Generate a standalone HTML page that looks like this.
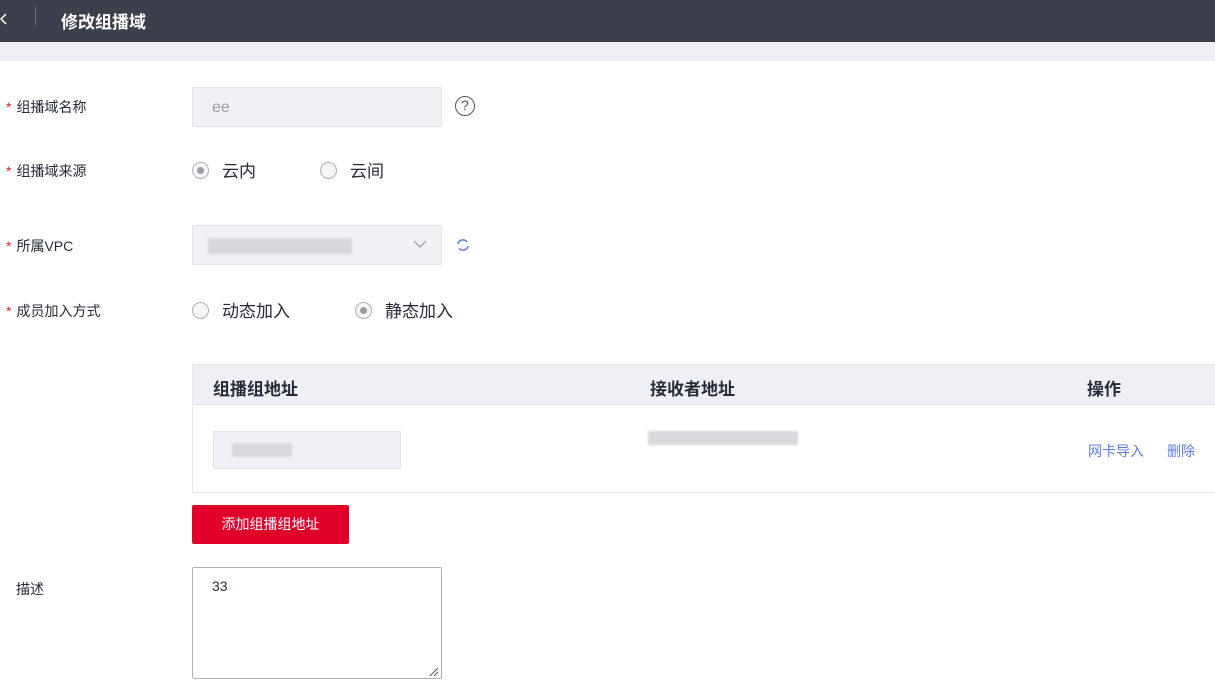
<!DOCTYPE html>
<html><head><meta charset="utf-8"><style>
*{box-sizing:border-box;margin:0;padding:0}
body{width:1215px;height:693px;overflow:hidden;background:#fff;font-family:"Liberation Sans","Noto Sans CJK SC",sans-serif;color:#252b3a;position:relative}
.top{position:absolute;left:0;top:0;width:1215px;height:42px;background:#3c3f4c}
.strip{position:absolute;left:0;top:42px;width:1215px;height:19px;background:#eef0f5}
.abs{position:absolute}
.lbl{position:absolute;left:6px;font-size:14px;color:#252b3a}
.lbl b{color:#e0252c;font-weight:normal;margin-right:5px}
.inp{position:absolute;background:#f0f1f6;border:1px solid #dfe1e6;border-radius:2px}
.radio{position:absolute;width:17px;height:17px;border:1px solid #adb0b8;border-radius:50%;background:#f5f5f7}
.radio.on::after{content:"";position:absolute;left:4px;top:4px;width:7px;height:7px;border-radius:50%;background:#9a9ca3}
.rt{position:absolute;font-size:17px;color:#252b3a}
.blur{position:absolute;background:#d8d8dc;filter:blur(1px)}
</style></head><body>
<div class="top"></div>
<svg class="abs" style="left:0;top:12px" width="8" height="14"><path d="M6 2L1 7l5 5" stroke="#fff" fill="none" stroke-width="1.5"/></svg>
<div class="abs" style="left:35px;top:6px;width:1px;height:20px;background:#6a6d78"></div>
<div class="abs" style="left:61px;top:8px;color:#fff;font-size:17px;font-weight:bold">修改组播域</div>
<div class="strip"></div>

<div class="lbl" style="top:97px"><b>*</b>组播域名称</div>
<div class="inp" style="left:192px;top:87px;width:250px;height:40px"></div>
<div class="abs" style="left:212px;top:99px;font-size:16px;color:#9a9ca3">ee</div>
<div class="abs" style="left:455px;top:96px;width:20px;height:20px;border:1.5px solid #555;border-radius:50%;font-size:14px;text-align:center;line-height:17px;color:#555">?</div>

<div class="lbl" style="top:161px"><b>*</b>组播域来源</div>
<div class="radio on" style="left:192px;top:162px"></div><div class="rt" style="left:222px;top:157px">云内</div>
<div class="radio" style="left:320px;top:162px"></div><div class="rt" style="left:350px;top:157px">云间</div>

<div class="lbl" style="top:236px"><b>*</b>所属VPC</div>
<div class="inp" style="left:192px;top:225px;width:250px;height:40px"></div>
<div class="blur" style="left:208px;top:238px;width:144px;height:16px"></div>
<svg class="abs" style="left:412px;top:238px" width="16" height="12"><path d="M2 3l6 6 6-6" stroke="#9a9ca3" fill="none" stroke-width="1.2"/></svg>
<svg class="abs" style="left:456px;top:238px" width="14" height="14"><path d="M2 6a5 5 0 0 1 9-2M12 8a5 5 0 0 1-9 2" stroke="#5e7ce0" fill="none" stroke-width="1.5"/></svg>

<div class="lbl" style="top:301px"><b>*</b>成员加入方式</div>
<div class="radio" style="left:192px;top:302px"></div><div class="rt" style="left:222px;top:297px">动态加入</div>
<div class="radio on" style="left:355px;top:302px"></div><div class="rt" style="left:385px;top:297px">静态加入</div>

<div class="abs" style="left:192px;top:364px;width:1030px;height:129px;border:1px solid #e4e7ee"></div>
<div class="abs" style="left:193px;top:365px;width:1030px;height:40px;background:#eff0f5;border-bottom:1px solid #e4e7ee"></div>
<div class="abs" style="left:213px;top:375px;font-size:17px;font-weight:bold">组播组地址</div>
<div class="abs" style="left:650px;top:375px;font-size:17px;font-weight:bold">接收者地址</div>
<div class="abs" style="left:1087px;top:375px;font-size:17px;font-weight:bold">操作</div>
<div class="inp" style="left:213px;top:431px;width:188px;height:38px"></div>
<div class="blur" style="left:232px;top:443px;width:60px;height:14px"></div>
<div class="blur" style="left:648px;top:431px;width:150px;height:14px"></div>
<div class="abs" style="left:1088px;top:441px;font-size:14px;color:#5e7ce0">网卡导入</div>
<div class="abs" style="left:1167px;top:441px;font-size:14px;color:#5e7ce0">删除</div>

<div class="abs" style="left:192px;top:505px;width:157px;height:39px;background:#e0002a;border-radius:2px;color:#fff;font-size:14px;text-align:center;line-height:39px">添加组播组地址</div>

<div class="lbl" style="top:579px;left:16px">描述</div>
<div class="abs" style="left:192px;top:567px;width:250px;height:112px;border:1px solid #adb0b8;border-radius:2px"></div>
<div class="abs" style="left:212px;top:578px;font-size:14px">33</div>
<svg class="abs" style="left:428px;top:666px" width="11" height="11"><path d="M2 10L10 2M6 10L10 6" stroke="#555" stroke-width="1"/></svg>
</body></html>
